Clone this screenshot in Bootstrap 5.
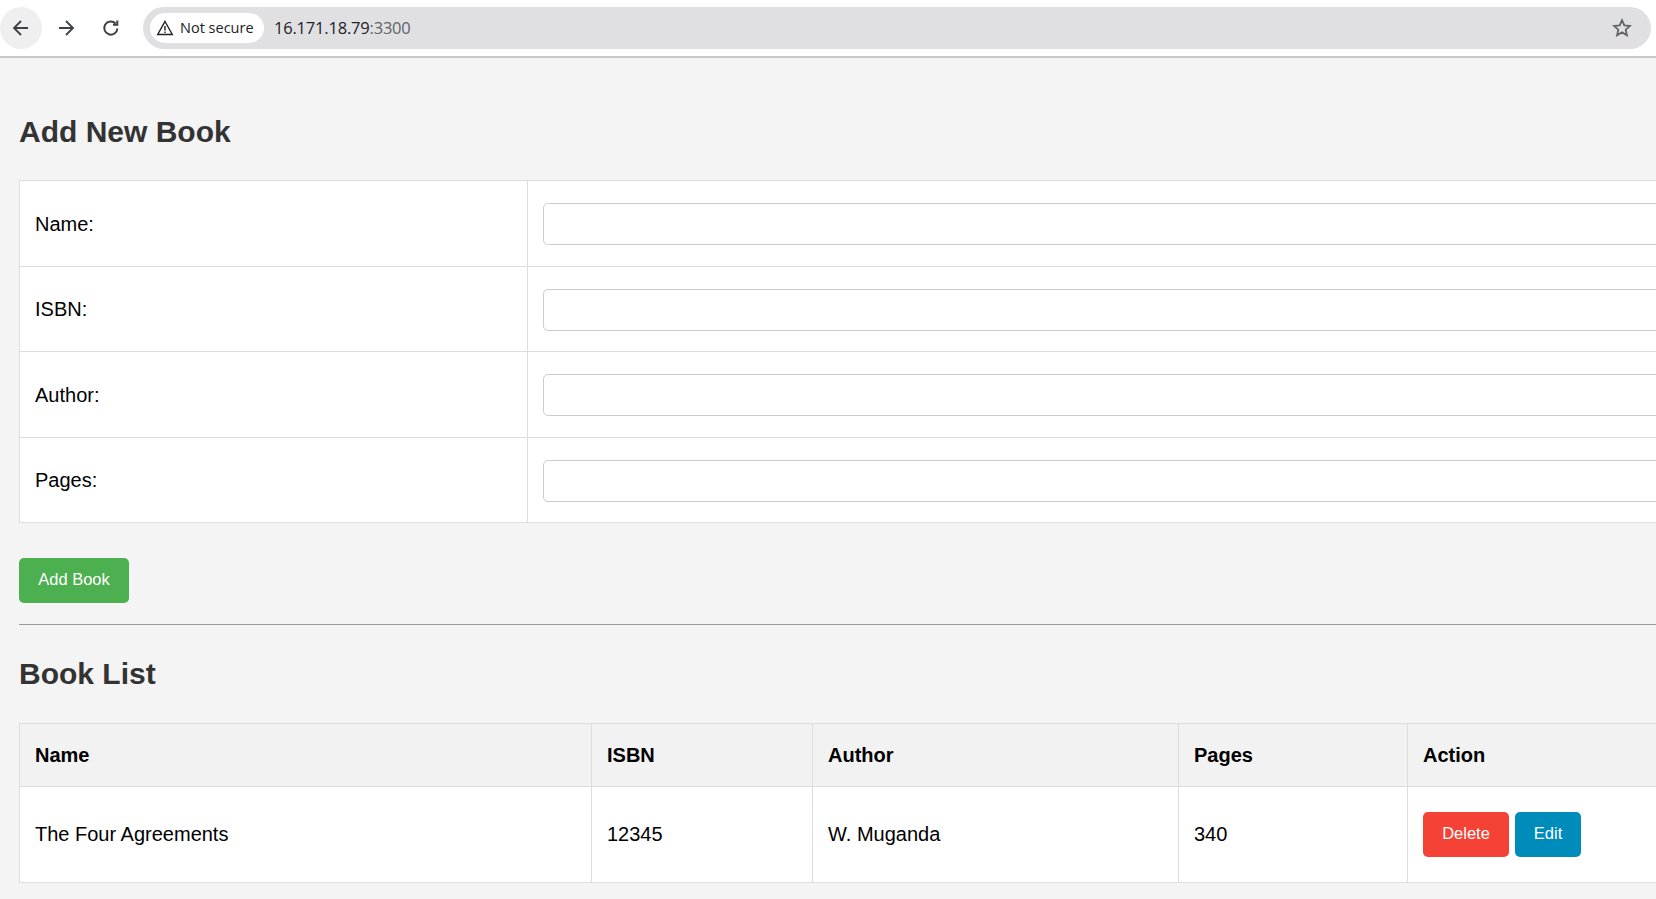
<!DOCTYPE html>
<html lang="en">
<head>
    <meta charset="UTF-8">
    <meta name="viewport" content="width=device-width, initial-scale=1.0">
    <title>Books</title>
    <link href="https://cdn.jsdelivr.net/npm/bootstrap@5.3.0/dist/css/bootstrap.min.css" rel="stylesheet">
    <style>
        html, body {
            height: 100%;
        }
        body {
            font-family: "Liberation Sans", Arial, sans-serif;
            background-color: #f4f4f4;
            color: #000;
            overflow: hidden;
        }
        .browser-bar {
            height: 58px;
            background-color: #fff;
            border-bottom: 2px solid #c8c8c8;
            padding-right: 5px;
        }
        .nav-btn {
            width: 42px;
            height: 42px;
            flex: 0 0 42px;
            border-radius: 50%;
            margin-right: 3px;
        }
        .nav-btn-active {
            background-color: #efefef;
        }
        .omnibox {
            height: 42px;
            margin-left: 8px;
            background-color: #e0e0e3;
            border-radius: 21px;
            padding: 0 7px;
        }
        .secure-chip {
            height: 30px;
            width: 114px;
            background-color: #fff;
            border-radius: 15px;
            padding-left: 6px;
            font-family: "Open Sans", "Noto Sans", sans-serif;
            font-size: 14.5px;
            font-weight: 500;
            color: #202124;
            gap: 6px;
        }
        .url-host {
            font-family: "Open Sans", "Noto Sans", sans-serif;
            font-size: 16.5px;
            margin-left: 10px;
            color: #202124;
            letter-spacing: -0.2px;
        }
        .url-port {
            color: #5f6368;
        }
        .star-icon {
            margin-right: 12px;
        }
        .page-body {
            padding: 0 0 0 19px;
            width: 2100px;
        }
        .page-title {
            font-size: 30px;
            font-weight: 700;
            color: #333;
            line-height: 37px;
            margin: 0;
        }
        .title-add {
            padding-top: 55px;
            padding-bottom: 30px;
        }
        .title-list {
            padding-top: 30px;
            padding-bottom: 31px;
        }
        .book-table {
            --bs-table-bg: #fff;
            --bs-table-border-color: #ddd;
            --bs-border-color: #ddd;
            table-layout: fixed;
            width: 2000px;
            margin: 0;
            font-size: 20px;
            color: #000;
        }
        .book-table td, .book-table th {
            padding: 19.5px 15px;
            vertical-align: middle;
            line-height: 23px;
        }
        .book-table .form-cell {
            height: 85.5px;
            padding-top: 22px;
            padding-bottom: 20px;
        }
        .book-table tr > *:first-child {
            border-left-width: 1px;
        }
        .book-input {
            height: 42px;
            border-color: #ccc;
            border-radius: 5px;
            background-color: #fff;
        }
        .list-table th {
            background-color: #f2f2f2;
            --bs-table-bg: #f2f2f2;
            height: 63px;
            font-weight: 700;
        }
        .list-table td {
            height: 96px;
        }
        .act-btn {
            height: 45px;
            border: 0;
            border-radius: 5px;
            color: #fff;
            font-size: 16.5px;
            line-height: 20px;
            padding: 0 0 4px;
        }
        .act-btn:hover {
            color: #fff;
        }
        .act-add {
            width: 110px;
            background-color: #4caf50;
        }
        .act-add:hover {
            background-color: #4caf50;
        }
        .act-delete {
            width: 86px;
            background-color: #f44336;
        }
        .act-delete:hover {
            background-color: #f44336;
        }
        .act-edit {
            width: 66px;
            background-color: #008cba;
        }
        .act-edit:hover {
            background-color: #008cba;
        }
        .action-group {
            gap: 6px;
        }
        .add-row {
            padding-top: 35px;
        }
        .page-rule {
            margin: 21px 0 0;
            width: 2000px;
            border-top: 1px solid #999;
            opacity: 1;
        }
        .form-label-col { width: 508px; }
        .col-name { width: 572px; }
        .col-isbn { width: 221px; }
        .col-author { width: 366px; }
        .col-pages { width: 229px; }
    </style>
</head>
<body>
    <header class="browser-bar d-flex align-items-center">
        <div class="nav-btn nav-btn-active d-flex align-items-center justify-content-center">
            <svg width="20" height="20" viewBox="0 0 20 20" fill="none" stroke="#3c4043" stroke-width="1.8"><path d="M17 10H3.5M10 3l-7 7 7 7"/></svg>
        </div>
        <div class="nav-btn d-flex align-items-center justify-content-center">
            <svg width="20" height="20" viewBox="0 0 20 20" fill="none" stroke="#3c4043" stroke-width="1.8"><path d="M3 10h13.5M10 3l7 7-7 7"/></svg>
        </div>
        <div class="nav-btn d-flex align-items-center justify-content-center">
            <svg width="20" height="20" viewBox="0 0 20 20" fill="none" stroke="#3c4043" stroke-width="2"><path d="M16.4 10.500a6.600 6.600 0 1 1-1.800-5"/><path d="M16.300 2.400v4.300H12"/></svg>
        </div>
        <div class="omnibox flex-grow-1 d-flex align-items-center">
            <div class="secure-chip d-flex align-items-center">
                <svg width="18" height="18" viewBox="0 0 18 18" fill="none" stroke="#202124" stroke-width="1.4"><path d="M9 2.500 16.300 15.500H1.700Z"/><path d="M9 7v4.500M9 12.500v1.400"/></svg>
                <span>Not secure</span>
            </div>
            <span class="url-host">16.171.18.79<span class="url-port">:3300</span></span>
            <svg class="star-icon ms-auto" width="20" height="20" viewBox="0 0 20 20" fill="none" stroke="#5f6368" stroke-width="1.8"><path d="M10 2.200l2.300 5.200 5.600.5-4.200 3.800 1.200 5.600L10 14.400l-4.900 2.900 1.200-5.600L2.100 7.900l5.600-.5Z"/></svg>
        </div>
    </header>

    <main class="page-body">
        <h2 class="page-title title-add">Add New Book</h2>
        <form>
            <table class="table table-bordered book-table">
                <colgroup><col class="form-label-col"><col></colgroup>
                <tbody>
                    <tr><td class="form-cell">Name:</td><td class="form-cell"><input class="form-control book-input" type="text"></td></tr>
                    <tr><td class="form-cell">ISBN:</td><td class="form-cell"><input class="form-control book-input" type="text"></td></tr>
                    <tr><td class="form-cell">Author:</td><td class="form-cell"><input class="form-control book-input" type="text"></td></tr>
                    <tr><td class="form-cell">Pages:</td><td class="form-cell"><input class="form-control book-input" type="text"></td></tr>
                </tbody>
            </table>
            <div class="add-row">
                <button class="btn act-btn act-add" type="button">Add Book</button>
            </div>
        </form>
        <hr class="page-rule">
        <h2 class="page-title title-list">Book List</h2>
        <table class="table table-bordered book-table list-table">
            <colgroup><col class="col-name"><col class="col-isbn"><col class="col-author"><col class="col-pages"><col></colgroup>
            <thead>
                <tr><th>Name</th><th>ISBN</th><th>Author</th><th>Pages</th><th>Action</th></tr>
            </thead>
            <tbody>
                <tr>
                    <td>The Four Agreements</td>
                    <td>12345</td>
                    <td>W. Muganda</td>
                    <td>340</td>
                    <td>
                        <div class="d-flex action-group">
                            <button class="btn act-btn act-delete" type="button">Delete</button>
                            <button class="btn act-btn act-edit" type="button">Edit</button>
                        </div>
                    </td>
                </tr>
            </tbody>
        </table>
    </main>
    <script src="https://cdn.jsdelivr.net/npm/bootstrap@5.3.0/dist/js/bootstrap.bundle.min.js"></script>
</body>
</html>
